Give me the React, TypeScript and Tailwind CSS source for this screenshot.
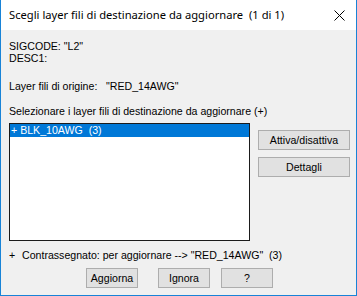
import React from "react";

const font = { fontFamily: '"Liberation Sans", Arial, sans-serif' };

function WinButton({ label, className }: { label: string; className: string }) {
  return (
    <div
      className={`flex items-center justify-center bg-[#e1e1e1] border border-[#adadad] text-[10.6px] text-black ${className}`}
    >
      {label}
    </div>
  );
}

export default function App() {
  return (
    <div className="w-[357px] h-[296px] flex flex-col border-x border-b border-[#1883d7] bg-[#f0f0f0] overflow-hidden">
      <div className="h-[30px] bg-white flex items-center justify-between pl-[8px] pr-[10px] shrink-0">
        <span className="text-[11.2px] text-black" style={{ fontFamily: '"Noto Sans", "Open Sans", sans-serif' }}>
          Scegli layer fili di destinazione da aggiornare&nbsp; (1 di 1)
        </span>
        <svg width="11" height="11" viewBox="0 0 11 11" className="mr-[1px]">
          <path d="M0.5 0.5 L10.5 10.5 M10.5 0.5 L0.5 10.5" stroke="#000" strokeWidth="1" />
        </svg>
      </div>

      <div className="flex flex-col pl-[8px] pt-[10px] text-[10.6px] text-black leading-[12px]" style={font}>
        <div>SIGCODE: "L2"</div>
        <div>DESC1:</div>

        <div className="mt-[16px] flex">
          <span className="w-[97px]">Layer fili di origine:</span>
          <span>"RED_14AWG"</span>
        </div>

        <div className="mt-[13px]">Selezionare i layer fili di destinazione da aggiornare (+)</div>

        <div className="mt-[6px] flex gap-[8px]">
          <div className="w-[241px] h-[118px] bg-white border border-[#1b1b1b]">
            <div className="h-[13px] bg-[#0078d7] text-white pl-[1px] leading-[13px]">
              + BLK_10AWG&nbsp; (3)
            </div>
          </div>
          <div className="flex flex-col gap-[7px] pt-[7px]">
            <WinButton label="Attiva/disattiva" className="w-[92px] h-[20px]" />
            <WinButton label="Dettagli" className="w-[92px] h-[20px]" />
          </div>
        </div>

        <div className="mt-[8px] flex">
          <span className="w-[13px]">+</span>
          <span>Contrassegnato: per aggiornare --&gt; "RED_14AWG"&nbsp; (3)</span>
        </div>

        <div className="mt-[7px] flex gap-[10px] pl-[77px]">
          <WinButton label="Aggiorna" className="w-[52px] h-[20px]" />
          <WinButton label="Ignora" className="w-[52px] h-[20px] ml-[10px]" />
          <WinButton label="?" className="w-[52px] h-[20px] ml-[1px]" />
        </div>
      </div>
    </div>
  );
}
